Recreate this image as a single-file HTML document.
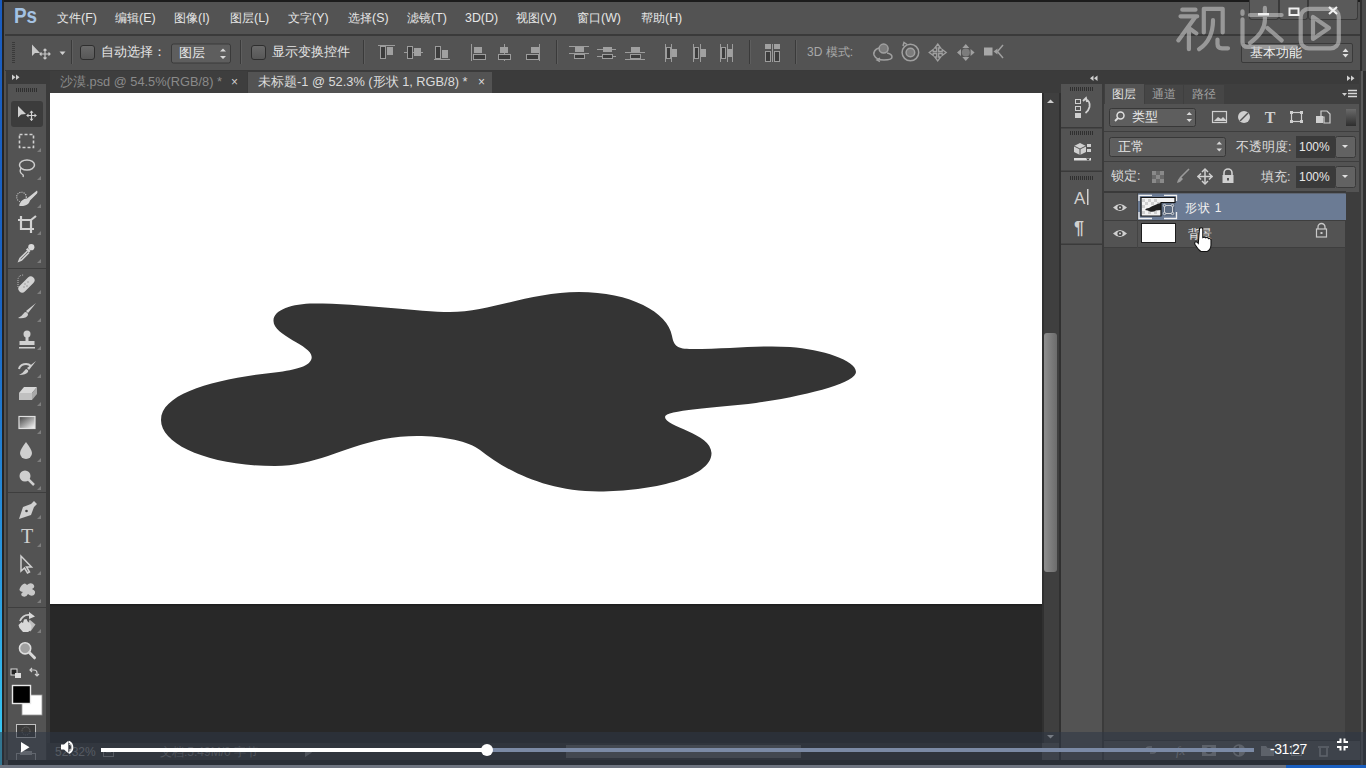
<!DOCTYPE html>
<html><head><meta charset="utf-8">
<style>
*{margin:0;padding:0;box-sizing:border-box}
html,body{width:1366px;height:768px;overflow:hidden;background:#535353;font-family:"Liberation Sans",sans-serif;color:#e6e6e6}
.a{position:absolute}
.t{position:absolute;white-space:nowrap;font-size:12px;line-height:14px;color:#e6e6e6}
</style></head><body>
<!-- frame -->
<div class="a" style="left:0;top:0;width:1366px;height:768px;background:#535353"></div>
<div class="a" style="left:0;top:0;width:1366px;height:1.5px;background:#1c1c1c"></div>
<div class="a" style="left:0;top:0;width:2.5px;height:768px;background:linear-gradient(#1a5cc0 0%,#1a64c4 40%,#2a9ae0 75%,#38c4f0 95%)"></div>
<div class="a" style="left:2px;top:0;width:2px;height:768px;background:#242424"></div>
<div class="a" style="left:4px;top:71px;width:3px;height:689px;background:#56524e"></div>
<div class="a" style="left:6px;top:71px;width:2px;height:689px;background:#3a3a3a"></div>
<div class="a" style="left:1360px;top:0;width:6px;height:71px;background:#4a4a4a"></div>
<div class="a" style="left:1360px;top:0;width:2px;height:71px;background:#2e2e2e"></div>
<!-- menu bar -->
<div class="a" style="left:5px;top:2px;width:1355px;height:32px;background:#535353"></div>
<div class="a" style="left:5px;top:34px;width:1355px;height:2px;background:#3a3a3a"></div>
<div class="t" style="left:14px;top:4px;font-size:22.5px;line-height:24px;font-weight:bold;color:#a4c2e2;transform:scaleX(0.84);transform-origin:0 0">Ps</div>
<div class="t" style="left:57px;top:11px;font-size:12.4px">文件(F)</div>
<div class="t" style="left:115px;top:11px;font-size:12.4px">编辑(E)</div>
<div class="t" style="left:174px;top:11px;font-size:12.4px">图像(I)</div>
<div class="t" style="left:230px;top:11px;font-size:12.4px">图层(L)</div>
<div class="t" style="left:288px;top:11px;font-size:12.4px">文字(Y)</div>
<div class="t" style="left:348px;top:11px;font-size:12.4px">选择(S)</div>
<div class="t" style="left:407px;top:11px;font-size:12.4px">滤镜(T)</div>
<div class="t" style="left:465px;top:11px;font-size:12.4px">3D(D)</div>
<div class="t" style="left:516px;top:11px;font-size:12.4px">视图(V)</div>
<div class="t" style="left:577px;top:11px;font-size:12.4px">窗口(W)</div>
<div class="t" style="left:641px;top:11px;font-size:12.4px">帮助(H)</div>
<!-- options bar -->
<div class="a" style="left:5px;top:36px;width:1355px;height:34px;background:#535353"></div>
<div class="a" style="left:5px;top:70px;width:1355px;height:1px;background:#3a3a3a"></div>

<!-- options bar content -->
<svg class="a" style="left:0;top:36px" width="1366" height="34">
 <g fill="#3a3a3a"><rect x="12" y="6" width="3" height="1"/><rect x="12" y="8" width="3" height="1"/><rect x="12" y="10" width="3" height="1"/><rect x="12" y="12" width="3" height="1"/><rect x="12" y="14" width="3" height="1"/><rect x="12" y="16" width="3" height="1"/><rect x="12" y="18" width="3" height="1"/><rect x="12" y="20" width="3" height="1"/><rect x="12" y="22" width="3" height="1"/><rect x="12" y="24" width="3" height="1"/><rect x="12" y="26" width="3" height="1"/></g>
 <path d="M32 8.5 L32 20 L35 17 L40 17 Z" fill="#c8c8c8"/>
 <path d="M45 13 v10 M40 18 h10 M43.5 14.5 l1.5 -1.5 l1.5 1.5 M43.5 21.5 l1.5 1.5 l1.5 -1.5 M41.5 16.5 l-1.5 1.5 l1.5 1.5 M48.5 16.5 l1.5 1.5 l-1.5 1.5" stroke="#c8c8c8" stroke-width="1.2" fill="none"/>
 <path d="M59.5 15.5 h6 l-3 3.5z" fill="#d0d0d0"/>
 <rect x="71" y="4" width="1" height="24" fill="#3a3a3a"/><rect x="72" y="4" width="1" height="24" fill="#5e5e5e"/>
 <defs><linearGradient id="cbg" x1="0" y1="0" x2="0" y2="1"><stop offset="0" stop-color="#6a6a6a"/><stop offset="1" stop-color="#565656"/></linearGradient></defs><rect x="80.5" y="9.5" width="14" height="14" rx="2.5" fill="url(#cbg)" stroke="#2e2e2e"/>
 <rect x="171.5" y="8" width="59" height="19" rx="2" fill="#5e5e5e" stroke="#3a3a3a"/>
 <path d="M220 15.5 l3 -3 l3 3z M220 20 l3 3 l3 -3z" fill="#d8d8d8"/>
 <rect x="240" y="4" width="1" height="24" fill="#3a3a3a"/><rect x="241" y="4" width="1" height="24" fill="#5e5e5e"/>
 <rect x="251.5" y="9.5" width="14" height="14" rx="2.5" fill="url(#cbg)" stroke="#2e2e2e"/>
 <rect x="363" y="4" width="1" height="24" fill="#3a3a3a"/><rect x="364" y="4" width="1" height="24" fill="#5e5e5e"/>
 <rect x="556" y="4" width="1" height="24" fill="#3a3a3a"/><rect x="557" y="4" width="1" height="24" fill="#5e5e5e"/>
 <rect x="749" y="4" width="1" height="24" fill="#3a3a3a"/><rect x="750" y="4" width="1" height="24" fill="#5e5e5e"/>
 <rect x="795" y="4" width="1" height="24" fill="#3a3a3a"/><rect x="796" y="4" width="1" height="24" fill="#5e5e5e"/>
 <g stroke="#9c9c9c" fill="none" stroke-width="1">
  <!-- align top -->
  <path d="M378 9.5 h17"/><rect x="380.5" y="10.5" width="5" height="12" fill="#3c3c3c"/><rect x="387" y="11" width="6" height="8" fill="#a0a0a0" stroke="none"/>
  <!-- align vcenter -->
  <path d="M404 16.5 h19"/><rect x="407.5" y="10.5" width="5" height="12" fill="#3c3c3c"/><rect x="414" y="12" width="7" height="8" fill="#a0a0a0" stroke="none"/>
  <!-- align bottom -->
  <path d="M434 23.5 h16"/><rect x="435.5" y="10.5" width="5" height="12" fill="#3c3c3c"/><rect x="442" y="14" width="6" height="8" fill="#a0a0a0" stroke="none"/>
  <!-- align left -->
  <path d="M471.5 8 v17"/><rect x="473.5" y="18.5" width="12" height="5" fill="#3c3c3c"/><rect x="474" y="11" width="8" height="6" fill="#a0a0a0" stroke="none"/>
  <path d="M504.5 8 v17"/><rect x="498.5" y="18.5" width="12" height="5" fill="#3c3c3c"/><rect x="500" y="11" width="8" height="6" fill="#a0a0a0" stroke="none"/>
  <path d="M539.5 8 v17"/><rect x="526.5" y="18.5" width="12" height="5" fill="#3c3c3c"/><rect x="531" y="11" width="8" height="6" fill="#a0a0a0" stroke="none"/>
  <!-- distribute -->
  <path d="M569 10.5 h20 M569 17.5 h20"/><rect x="574.5" y="18.5" width="10" height="4" fill="#3c3c3c"/><rect x="575" y="11" width="9" height="5" fill="#a0a0a0" stroke="none"/>
  <path d="M597 13.5 h19 M597 20.5 h19"/><rect x="602.5" y="18.5" width="10" height="4" fill="#3c3c3c"/><rect x="603" y="11" width="9" height="5" fill="#a0a0a0" stroke="none"/>
  <path d="M625 16.5 h20 M625 23.5 h20"/><rect x="630.5" y="18.5" width="10" height="4" fill="#3c3c3c"/><rect x="631" y="11" width="9" height="5" fill="#a0a0a0" stroke="none"/>
  <path d="M665.5 8 v18 M671.5 8 v18"/><rect x="666.5" y="11.5" width="4" height="11" fill="#3c3c3c"/><rect x="672" y="13" width="5" height="8" fill="#a0a0a0" stroke="none"/>
  <path d="M693.5 8 v18 M700.5 8 v18"/><rect x="694.5" y="11.5" width="4" height="11" fill="#3c3c3c"/><rect x="701" y="13" width="5" height="8" fill="#a0a0a0" stroke="none"/>
  <path d="M720.5 8 v18 M727.5 8 v18 M732.5 8 v18"/><rect x="721.5" y="11.5" width="4" height="11" fill="#3c3c3c"/><rect x="727" y="13" width="5" height="8" fill="#a0a0a0" stroke="none"/>
  <!-- auto align -->
  <rect x="765.5" y="15.5" width="5" height="10" fill="#3c3c3c"/><rect x="774.5" y="15.5" width="5" height="10" fill="#3c3c3c"/><path d="M772.5 8 v18"/><rect x="765" y="8" width="6" height="5" fill="#a0a0a0" stroke="none"/><rect x="774" y="8" width="6" height="5" fill="#a0a0a0" stroke="none"/>
 </g>
 <!-- 3d icons -->
 <g stroke="#a0a0a0" stroke-width="1.5" fill="#7c7c7c">
  <path d="M879 12 q-6 2 -5 7 q2 5 10 5 q8 0 8 -3 q0 -3 -5 -4" fill="none"/><circle cx="883.6" cy="12.6" r="4.5"/><path d="M880 22 l-3 2 l3 1.5" fill="none"/>
  <circle cx="910.4" cy="16.5" r="8.3" fill="none"/><circle cx="910.4" cy="16.5" r="4.3"/><path d="M903 10 l1 -3.5 l3 2" fill="none"/>
  <path d="M937.7 8 L940.7 12 L938.7 12 L938.7 15.5 L942.2 15.5 L942.2 13.5 L946.2 16.5 L942.2 19.5 L942.2 17.5 L938.7 17.5 L938.7 21 L940.7 21 L937.7 25 L934.7 21 L936.7 21 L936.7 17.5 L933.2 17.5 L933.2 19.5 L929.2 16.5 L933.2 13.5 L933.2 15.5 L936.7 15.5 L936.7 12 L934.7 12 Z" fill="#5a5a5a" stroke-width="1.3"/>
  <circle cx="965.8" cy="16.5" r="4" stroke="none"/><path d="M965.8 8 l3.5 4 h-7z M965.8 25 l3.5 -4 h-7z M957 16.5 l4 -3.5 v7z M974.6 16.5 l-4 -3.5 v7z" stroke="none" fill="#a0a0a0"/>
  <rect x="984" y="11.5" width="8.5" height="8" fill="#a8a8a8" stroke="none"/><path d="M993.5 15.5 l4 -3 v6z" fill="#a0a0a0" stroke="none"/><path d="M1003 9 l-5.5 6.5 l5.5 6.5" fill="none"/>
 </g>
</svg>
<div class="t" style="left:101px;top:45px;font-size:13px">自动选择：</div>
<div class="t" style="left:179px;top:46px;font-size:13px;color:#e8e8e8">图层</div>
<div class="t" style="left:272px;top:45px;font-size:12.5px">显示变换控件</div>
<div class="t" style="left:807px;top:45px;font-size:12px;color:#a8a8a8">3D 模式:</div>
<!-- workspace -->
<div class="a" style="left:1241px;top:43px;width:112px;height:20px;background:#5a5a5a;border:1px solid #3a3a3a;border-radius:2px"></div>
<div class="t" style="left:1250px;top:46px;font-size:13px;color:#f0f0f0">基本功能</div>
<svg class="a" style="left:1341px;top:46px" width="10" height="14"><path d="M1.5 6 l3 -3.5 l3 3.5z M1.5 8 l3 3.5 l3 -3.5z" fill="#e0e0e0"/></svg>
<!-- tab bar -->
<div class="a" style="left:46px;top:71px;width:1015px;height:22px;background:#3b3b3b"></div>
<div class="a" style="left:50px;top:71px;width:197px;height:22px;background:#3e3e3e"></div>
<div class="a" style="left:248px;top:72px;width:244px;height:21px;background:#535353"></div>
<div class="t" style="left:60px;top:75px;font-size:12.8px;color:#8a8a8a">沙漠.psd @ 54.5%(RGB/8) *</div>
<div class="t" style="left:231px;top:75px;color:#cfcfcf">×</div>
<div class="t" style="left:258px;top:75px;font-size:12.8px;color:#dcdcdc">未标题-1 @ 52.3% (形状 1, RGB/8) *</div>
<div class="t" style="left:478px;top:75px;color:#dcdcdc">×</div>
<!-- left toolbar -->
<div class="a" style="left:8px;top:71px;width:39px;height:689px;background:#535353"></div>
<div class="a" style="left:8px;top:71px;width:39px;height:13px;background:#3b3b3b"></div>
<div class="a" style="left:46px;top:71px;width:4px;height:689px;background:#3b3b3b"></div>

<!-- toolbar content -->
<svg class="a" style="left:0;top:71px" width="50" height="689">
 <path d="M12 3.5 l3.5 2.75 l-3.5 2.75z M16 3.5 l3.5 2.75 l-3.5 2.75z" fill="#d0d0d0"/>
 <g fill="#2f2f2f"><rect x="16" y="17" width="1" height="4"/><rect x="18" y="17" width="1" height="4"/><rect x="20" y="17" width="1" height="4"/><rect x="22" y="17" width="1" height="4"/><rect x="24" y="17" width="1" height="4"/><rect x="26" y="17" width="1" height="4"/><rect x="28" y="17" width="1" height="4"/><rect x="30" y="17" width="1" height="4"/><rect x="32" y="17" width="1" height="4"/><rect x="34" y="17" width="1" height="4"/><rect x="36" y="17" width="1" height="4"/></g>
 <rect x="11" y="30" width="32" height="26" rx="3" fill="#3c3c3c"/>
 <path d="M18 35 v11.5 l3 -3 l5 -0.5z" fill="#d0d0d0"/>
 <path d="M31.5 40 v9.5 M26.8 44.5 h9.5" stroke="#d4d4d4" stroke-width="1.2" fill="none"/><path d="M31.5 39.5 l-2 2.2 h4z M31.5 50 l-2 -2.2 h4z M26.3 44.5 l2.2 -2 v4z M36.7 44.5 l-2.2 -2 v4z" fill="#d4d4d4"/>
 <g id="tri" fill="#7e7e7e"><path d="M41 81 v-4 l-4 4z"/><path d="M41 109 v-4 l-4 4z"/><path d="M41 137 v-4 l-4 4z"/><path d="M41 164 v-4 l-4 4z"/><path d="M41 192 v-4 l-4 4z"/><path d="M41 223 v-4 l-4 4z"/><path d="M41 251 v-4 l-4 4z"/><path d="M41 279 v-4 l-4 4z"/><path d="M41 307 v-4 l-4 4z"/><path d="M41 335 v-4 l-4 4z"/><path d="M41 363 v-4 l-4 4z"/><path d="M41 391 v-4 l-4 4z"/><path d="M41 419 v-4 l-4 4z"/><path d="M41 448 v-4 l-4 4z"/><path d="M41 476 v-4 l-4 4z"/><path d="M41 504 v-4 l-4 4z"/><path d="M41 532 v-4 l-4 4z"/><path d="M41 562 v-4 l-4 4z"/></g>
 <!-- marquee -->
 <rect x="19.5" y="63.5" width="14" height="13" fill="none" stroke="#d0d0d0" stroke-width="1.6" stroke-dasharray="3 2"/>
 <!-- lasso -->
 <ellipse cx="27" cy="94" rx="7.5" ry="5" fill="none" stroke="#cfcfcf" stroke-width="1.5"/><path d="M21 97 q-2 4 1 6 q2 1 1 3" fill="none" stroke="#cfcfcf" stroke-width="1.3"/>
 <!-- quick select -->
 <circle cx="21.5" cy="126" r="4.8" fill="none" stroke="#c8c8c8" stroke-width="1.1" stroke-dasharray="1.1 1.1"/>
 <path d="M37 119.5 q1 1.5 0 3 l-7 7 q-1 4 -5 5 q-4 1 -6 0 q1 -3 3 -5 q2 -2 5 -2z" fill="#d4d4d4"/>
 <!-- crop -->
 <path d="M21 145 v13 h13 M18 149 h13 v13 M31 149 l5 -4" fill="none" stroke="#d2d2d2" stroke-width="2.2"/>
 <!-- eyedropper -->
 <g transform="translate(0,-71)">
  <circle cx="31.3" cy="247.2" r="3.1" fill="#dadada"/>
  <path d="M27.5 248 L30.5 251 L29 252.5 L26 249.5z" fill="#d8d8d8"/>
  <path d="M27.5 251 L20 258.5 L19 261 L21.5 260 L29 252.5" fill="none" stroke="#cfcfcf" stroke-width="1.6"/>
 </g>
 <rect x="8" y="197" width="38" height="1" fill="#3e3e3e"/>
 <!-- healing -->
 <g transform="translate(0,-71)">
  <path d="M19.5 286 L28 277.5 a3.8 3.8 0 0 1 5.4 5.4 L24.9 291.4 a3.8 3.8 0 0 1 -5.4 -5.4z" fill="#d2d2d2"/>
  <g fill="#8a8a8a"><circle cx="25" cy="284" r="0.7"/><circle cx="27" cy="286" r="0.7"/><circle cx="28" cy="282" r="0.7"/><circle cx="24" cy="287" r="0.7"/></g>
  <path d="M18 287 V280 Q18 275 24 275" fill="none" stroke="#bcbcbc" stroke-width="1" stroke-dasharray="1 1"/>
 </g>
 <!-- brush -->
 <path d="M36 232 l-8 10 l-2 -2z" fill="#d0d0d0"/><path d="M25 241 q3 0 3 3 q-2 4 -10 3 q4 -2 7 -6z" fill="#d0d0d0"/>
 <!-- stamp -->
 <circle cx="27" cy="263" r="3.5" fill="#d0d0d0"/><path d="M25.5 265 h3 v5 h6 v4 h-15 v-4 h6z" fill="#d0d0d0"/><rect x="19" y="276" width="16" height="1.5" fill="#d0d0d0"/>
 <!-- history brush -->
 <path d="M19 298 a7 6 0 0 1 12 -3" fill="none" stroke="#cfcfcf" stroke-width="2"/><path d="M36 290 l-7 9 l-2 -2z" fill="#d0d0d0"/><path d="M26 298 q3 1 2 3 q-2 3 -9 3 q4 -2 7 -6z" fill="#d0d0d0"/>
 <!-- eraser -->
 <path d="M19 322 l5 -6 h13 l-5 6z" fill="#d8d8d8"/><path d="M19 322 h13 v7 h-13z" fill="#c0c0c0"/><path d="M32 322 l5 -6 v7 l-5 6z" fill="#a8a8a8"/>
 <!-- gradient -->
 <defs><linearGradient id="gr" x1="0" y1="0" x2="1" y2="1"><stop offset="0" stop-color="#404040"/><stop offset="1" stop-color="#ffffff"/></linearGradient></defs>
 <rect x="19" y="345.5" width="16" height="12" fill="url(#gr)" stroke="#e0e0e0" stroke-width="1.2"/>
 <!-- blur -->
 <path d="M26 371 q-6 8 -6 11 a6 6 0 0 0 12 0 q0 -3 -6 -11z" fill="#cfcfcf"/>
 <!-- dodge -->
 <circle cx="25" cy="405" r="5.5" fill="#cfcfcf"/><path d="M28 408 l6 6" stroke="#cfcfcf" stroke-width="2.5"/>
 <rect x="8" y="421" width="38" height="1" fill="#3e3e3e"/>
 <!-- pen -->
 <path d="M34 430 l3 3 l-3 3 l-3 8 l-12 4 l4 -12 l8 -3z" fill="#d0d0d0"/><circle cx="26.5" cy="440" r="1.3" fill="#444"/>
 <!-- type -->
 <text x="27" y="472" font-family="Liberation Serif" font-size="20" fill="#d0d0d0" text-anchor="middle">T</text>
 <!-- path select -->
 <path d="M21 485 v15 l3.5 -3 l3 5 l2 -1 l-3 -5 h5z" fill="none" stroke="#d0d0d0" stroke-width="1.5"/>
 <!-- shape -->
 <path d="M22 514 q3 -3 5 0 q3 -3 6 -1 q3 3 -1 5 q5 2 2 6 q-3 2 -6 -1 q-2 4 -6 2 q-2 -2 1 -4 q-5 -1 -3 -4 q1 -2 2 -3z" fill="#c8c8c8"/>
 <rect x="8" y="536" width="38" height="1" fill="#3e3e3e"/>
 <!-- hand -->
 <g transform="translate(0,-71)">
  <path d="M20 621 Q23 614 30 615" fill="none" stroke="#d0d0d0" stroke-width="1.8"/><path d="M29 612 L35 616.5 L29 619z" fill="#d8d8d8"/>
  <path d="M29.5 619.5 L35.5 624.5 L30.5 631.5 L27 628z" fill="#bdbdbd"/>
  <path d="M18.5 625 L21.5 622 L23 623 L24 619.5 L26.5 619 L28 622 L30 623 L31.5 626 L31 630 L28 632 L23 632 L19.5 628z" fill="#d8d8d8"/>
  <circle cx="25.1" cy="648.3" r="5.6" fill="#a0a0a0" stroke="#dedede" stroke-width="1.6"/><path d="M29.3 652.5 L34.5 657.8" stroke="#d8d8d8" stroke-width="3" stroke-linecap="round"/>
 </g>
 <!-- default colors & swap -->
 <rect x="11" y="598" width="6" height="6" fill="#222" stroke="#ddd" stroke-width="1"/><rect x="15" y="602" width="6" height="5" fill="#ddd"/>
 <path d="M32 597 l-2 2 l2 2 M30 599 h4 q3 0 3 3 v3 M35 603 l2 2 l2 -2" fill="none" stroke="#d0d0d0" stroke-width="1.2"/>
 <rect x="22" y="624" width="20" height="20" fill="#ffffff" stroke="#9a9a9a" stroke-width="0.8"/>
 <rect x="12.5" y="614.5" width="18" height="18" fill="#000" stroke="#e8e8e8" stroke-width="1.4"/>
 <!-- quick mask -->
 <rect x="16.5" y="653.5" width="19" height="13" fill="#3a3a3a" stroke="#c0c0c0" stroke-width="1"/>
 <rect x="16.5" y="682.5" width="19" height="12" fill="none" stroke="#a0a0a0" stroke-width="1"/><rect x="20" y="680" width="12" height="4" fill="#a0a0a0"/><circle cx="26" cy="660" r="4" fill="none" stroke="#777" stroke-width="1" stroke-dasharray="1 1"/>
</svg>
<!-- canvas -->
<div class="a" style="left:50px;top:93px;width:992px;height:650px;background:#282828"></div>
<div class="a" style="left:50px;top:604px;width:992px;height:3px;background:linear-gradient(#1c1c1c,#282828)"></div>
<div class="a" style="left:50px;top:93px;width:992px;height:511px;background:#ffffff"></div>
<svg class="a" style="left:0;top:0" width="1366" height="768"><path d="M273.5 321 C273 310 292 303.5 314 303.5 C360 303.5 420 312 450 312 C490 312 530 292 579 292 C630 292 668 312 672 336 C674 346 677 349 692 349 C730 349 760 345 790 347 C822 349.5 856 360 856 372 C856 382 812 395 756 403 C715 408 665 410 665 417 C665 427 711 433 711.5 453 C712 478 650 491.5 599 491.5 C545 491.5 505 470 480 450 C465 438 420 432 384 439 C340 448 315 466 275 466 C210 466 161 445 161 420 C161 392 220 378 279 372 C300 369 311.7 365 311.7 357 C311.7 345 273.5 336 273.5 321Z" fill="#343434"/></svg>
<!-- vscroll -->
<div class="a" style="left:1042px;top:93px;width:17px;height:650px;background:#3f3f3f"></div>
<div class="a" style="left:1042px;top:93px;width:2px;height:650px;background:#303030"></div>
<div class="a" style="left:1044px;top:333px;width:13px;height:239px;background:linear-gradient(90deg,#8e8e8e,#6c6c6c);border-radius:3px"></div>
<div class="a" style="left:1059px;top:71px;width:2px;height:689px;background:#303030"></div>
<div class="a" style="left:1042px;top:71px;width:19px;height:22px;background:#3b3b3b"></div>
<!-- mini strip -->
<div class="a" style="left:1061px;top:71px;width:41px;height:689px;background:#535353"></div>
<div class="a" style="left:1061px;top:71px;width:41px;height:13px;background:#3b3b3b"></div>
<div class="a" style="left:1102px;top:71px;width:2px;height:689px;background:#3b3b3b"></div>
<svg class="a" style="left:1061px;top:71px" width="43" height="661">
 <path d="M36.5 4.5 l-3.5 2.75 l3.5 2.75z M32.5 4.5 l-3.5 2.75 l3.5 2.75z" fill="#d0d0d0"/>
 <rect x="0" y="56" width="41" height="1.5" fill="#3a3a3a"/>
 <rect x="0" y="99.5" width="41" height="1.5" fill="#3a3a3a"/>
 <rect x="0" y="172.5" width="41" height="1.5" fill="#3a3a3a"/>
 <g fill="#2f2f2f">
  <rect x="9" y="16" width="24" height="4"/><rect x="9" y="60" width="24" height="4"/><rect x="9" y="105" width="24" height="4"/>
 </g>
 <g fill="#535353"><rect x="10" y="16" width="1" height="4"/><rect x="12" y="16" width="1" height="4"/><rect x="14" y="16" width="1" height="4"/><rect x="16" y="16" width="1" height="4"/><rect x="18" y="16" width="1" height="4"/><rect x="20" y="16" width="1" height="4"/><rect x="22" y="16" width="1" height="4"/><rect x="24" y="16" width="1" height="4"/><rect x="26" y="16" width="1" height="4"/><rect x="28" y="16" width="1" height="4"/><rect x="30" y="16" width="1" height="4"/><rect x="32" y="16" width="1" height="4"/>
 <rect x="10" y="60" width="1" height="4"/><rect x="12" y="60" width="1" height="4"/><rect x="14" y="60" width="1" height="4"/><rect x="16" y="60" width="1" height="4"/><rect x="18" y="60" width="1" height="4"/><rect x="20" y="60" width="1" height="4"/><rect x="22" y="60" width="1" height="4"/><rect x="24" y="60" width="1" height="4"/><rect x="26" y="60" width="1" height="4"/><rect x="28" y="60" width="1" height="4"/><rect x="30" y="60" width="1" height="4"/><rect x="32" y="60" width="1" height="4"/>
 <rect x="10" y="105" width="1" height="4"/><rect x="12" y="105" width="1" height="4"/><rect x="14" y="105" width="1" height="4"/><rect x="16" y="105" width="1" height="4"/><rect x="18" y="105" width="1" height="4"/><rect x="20" y="105" width="1" height="4"/><rect x="22" y="105" width="1" height="4"/><rect x="24" y="105" width="1" height="4"/><rect x="26" y="105" width="1" height="4"/><rect x="28" y="105" width="1" height="4"/><rect x="30" y="105" width="1" height="4"/><rect x="32" y="105" width="1" height="4"/></g>
 <!-- history -->
 <rect x="14.5" y="28.5" width="5" height="4" fill="none" stroke="#cfcfcf"/><rect x="14.5" y="35.5" width="5" height="4" fill="none" stroke="#cfcfcf"/><rect x="14" y="42" width="6" height="5" fill="#cfcfcf"/>
 <path d="M22 30 l3 -3 l1 4 M24.5 28 q5 2 4 8 q-1 4 -4 6" fill="none" stroke="#d0d0d0" stroke-width="1.8"/>
 <!-- 3d -->
 <path d="M19 72 l6 3 v6 l-6 3 l-6 -3 v-6z" fill="#cfcfcf"/><path d="M13 75 l6 3 l6 -3 M19 78 v6" stroke="#535353" fill="none"/>
 <rect x="26" y="73" width="4" height="3" fill="#cfcfcf"/><rect x="26" y="78" width="4" height="3" fill="#cfcfcf"/>
 <rect x="13" y="87" width="17" height="2.5" fill="#dedede"/><path d="M25 87.5 h4 l-2 2z" fill="#333"/>
 <!-- A| -->
 <text x="13" y="133" font-family="Liberation Sans" font-size="17" fill="#d0d0d0">A</text><rect x="26" y="118" width="1.5" height="16" fill="#d0d0d0"/>
 <text x="13" y="163" font-family="Liberation Sans" font-size="18" font-weight="bold" fill="#d0d0d0">¶</text>
</svg>
<!-- layers panel -->
<div class="a" style="left:1104px;top:71px;width:256px;height:13px;background:#3b3b3b"></div>
<div class="a" style="left:1104px;top:84px;width:256px;height:20px;background:#3f3f3f"></div>
<div class="a" style="left:1105px;top:84px;width:39px;height:20px;background:#535353"></div>
<div class="a" style="left:1145px;top:85px;width:38px;height:19px;background:#464646"></div>
<div class="a" style="left:1184px;top:85px;width:40px;height:19px;background:#464646"></div>
<div class="a" style="left:1104px;top:104px;width:256px;height:656px;background:#535353"></div>
<div class="a" style="left:1104px;top:131px;width:256px;height:1px;background:#3e3e3e"></div>
<div class="a" style="left:1104px;top:161px;width:256px;height:1px;background:#3e3e3e"></div>
<div class="a" style="left:1104px;top:191px;width:242px;height:1.5px;background:#3a3a3a"></div>
<div class="a" style="left:1104px;top:248px;width:242px;height:512px;background:#474747"></div>
<div class="a" style="left:1345px;top:192px;width:14px;height:568px;background:#3d3d3d"></div>
<div class="a" style="left:1359px;top:71px;width:2px;height:697px;background:#3d3d3d"></div>
<div class="a" style="left:1361px;top:71px;width:2px;height:697px;background:#5a5a5a"></div>
<div class="a" style="left:1363px;top:71px;width:3px;height:697px;background:#303030"></div>
<div class="t" style="left:1112px;top:87px;font-size:12px;color:#e0e0e0">图层</div>
<div class="t" style="left:1152px;top:87px;font-size:12px;color:#a0a0a0">通道</div>
<div class="t" style="left:1192px;top:87px;font-size:12px;color:#a0a0a0">路径</div>
<svg class="a" style="left:1104px;top:71px" width="256" height="180">
 <path d="M243 4.5 l3.5 2.75 l-3.5 2.75z M247 4.5 l3.5 2.75 l-3.5 2.75z" fill="#d0d0d0"/>
 <path d="M238 22 h5 l-2.5 3z" fill="#cfcfcf"/><path d="M244 19.5 h9 M244 22.5 h9 M244 25.5 h9" stroke="#d8d8d8" stroke-width="1.4"/>
 <!-- filter dropdown -->
 <rect x="5.5" y="37.5" width="86" height="18" rx="2" fill="#5e5e5e" stroke="#383838"/>
 <circle cx="16.5" cy="44.5" r="3.5" fill="none" stroke="#e0e0e0" stroke-width="1.5"/><path d="M14 47 l-3 3" stroke="#e0e0e0" stroke-width="1.8"/>
 <path d="M82.5 44 l2.75 -3 l2.75 3z M82.5 48 l2.75 3 l2.75 -3z" fill="#d8d8d8"/>
 <!-- filter icons -->
 <rect x="108.5" y="40.5" width="14" height="11" fill="#5a5a5a" stroke="#cfcfcf" stroke-width="1.2"/><path d="M110 50 l4 -4 l3 2 l2 -2 l3 3 v1z" fill="#cfcfcf"/>
 <circle cx="140" cy="46" r="6" fill="#cfcfcf"/><path d="M136 50 l8 -8" stroke="#535353" stroke-width="1.5"/>
 <text x="166" y="52" font-family="Liberation Serif" font-size="16" font-weight="bold" fill="#cfcfcf" text-anchor="middle">T</text>
 <rect x="187.5" y="41.5" width="10" height="9" fill="none" stroke="#cfcfcf" stroke-width="1.2"/><g fill="#cfcfcf"><rect x="186" y="40" width="3" height="3"/><rect x="196" y="40" width="3" height="3"/><rect x="186" y="49" width="3" height="3"/><rect x="196" y="49" width="3" height="3"/></g>
 <path d="M217 40 h6 l3 3 v9 h-6 v-6 h-3z" fill="none" stroke="#cfcfcf" stroke-width="1.2"/><rect x="212" y="45" width="7" height="7" fill="#cfcfcf"/>
 <defs><linearGradient id="tg" x1="0" y1="0" x2="0" y2="1"><stop offset="0" stop-color="#6a6a6a"/><stop offset="1" stop-color="#2e2e2e"/></linearGradient></defs>
 <rect x="242" y="38" width="10" height="17" fill="url(#tg)"/>
 <!-- blend dropdown -->
 <rect x="5.5" y="66.5" width="116" height="19" rx="2" fill="#5e5e5e" stroke="#383838"/>
 <path d="M112.5 73.5 l2.75 -3 l2.75 3z M112.5 77.5 l2.75 3 l2.75 -3z" fill="#d8d8d8"/>
 <rect x="192" y="65" width="39" height="22" fill="#3a3a3a"/>
 <rect x="231.5" y="65.5" width="20" height="21" rx="2" fill="#626262" stroke="#3a3a3a"/><path d="M238 74 h6 l-3 3z" fill="#e0e0e0"/>
 <rect x="192" y="95" width="39" height="22" fill="#3a3a3a"/>
 <rect x="231.5" y="95.5" width="20" height="21" rx="2" fill="#626262" stroke="#3a3a3a"/><path d="M238 104 h6 l-3 3z" fill="#e0e0e0"/>
 <!-- lock icons -->
 <g fill="#8a8a8a"><rect x="48" y="100" width="12" height="12" fill="#6a6a6a"/><rect x="48" y="100" width="4" height="4"/><rect x="56" y="100" width="4" height="4"/><rect x="52" y="104" width="4" height="4"/><rect x="48" y="108" width="4" height="4"/><rect x="56" y="108" width="4" height="4"/></g>
 <path d="M85 98 l-9 9" stroke="#9a9a9a" stroke-width="1.6"/><path d="M77 106 q-3 1 -4 6 q4 -1 6 -4z" fill="#9a9a9a"/>
 <path d="M101 98 v15 M93.5 105.5 h15" stroke="#d0d0d0" stroke-width="1.5"/><path d="M98 101 l3 -3 l3 3 M98 110 l3 3 l3 -3 M97 102.5 l-3 3 l3 3 M105 102.5 l3 3 l-3 3" fill="none" stroke="#d0d0d0" stroke-width="1.5"/>
 <path d="M120 104 v-2 a4 4 0 0 1 8 0 v2" fill="none" stroke="#d0d0d0" stroke-width="1.6"/><rect x="118.5" y="104" width="11" height="8" fill="#d0d0d0"/><rect x="123" y="107" width="2" height="2.5" fill="#535353"/>
 <!-- layer rows -->
 <rect x="33" y="122.5" width="209" height="26.5" fill="#6b7b94"/>
 <rect x="0" y="149" width="242" height="1" fill="#3e3e3e"/>
 <rect x="0" y="176" width="242" height="1" fill="#3e3e3e"/>
 <rect x="33" y="122" width="1" height="55" fill="#444"/>
 <!-- eyes -->
 <path d="M9 136.5 q7 -7 14 0 q-7 7 -14 0z" fill="#d0d0d0"/><circle cx="16" cy="136.5" r="2.6" fill="#474747"/><circle cx="16" cy="136.5" r="1" fill="#d0d0d0"/>
 <path d="M9 162.5 q7 -7 14 0 q-7 7 -14 0z" fill="#d0d0d0"/><circle cx="16" cy="162.5" r="2.6" fill="#474747"/><circle cx="16" cy="162.5" r="1" fill="#d0d0d0"/>
 <!-- thumb 1 -->
 <g transform="translate(-1104,-71)">
  <path d="M1139 201 V195.3 H1152 M1164 195.3 H1176.5 V201 M1139 212 V218.5 H1152 M1164 218.5 H1176.5 V212" fill="none" stroke="#f0f0f0" stroke-width="1.3"/>
  <rect x="1141.5" y="197.5" width="19.5" height="18.5" fill="#f2f2f2"/>
  <rect x="1141.5" y="197.5" width="33.5" height="5" fill="#f2f2f2"/>
  <g fill="#cfcfcf"><rect x="1142" y="199" width="3" height="3"/><rect x="1148" y="199" width="3" height="3"/><rect x="1154" y="199" width="3" height="3"/><rect x="1145" y="202" width="3" height="3"/><rect x="1151" y="202" width="3" height="3"/><rect x="1157" y="202" width="3" height="3"/><rect x="1142" y="205" width="3" height="3"/><rect x="1142" y="211" width="3" height="3"/><rect x="1148" y="211" width="3" height="3"/><rect x="1154" y="211" width="3" height="3"/></g>
  <path d="M1145 210 q1 -2 4 -2 q3 -2 6 -3 q3 -1.5 6 -2 v7 q-3 0 -5 0.5 q-3 2 -6 1 q-2 -1.5 -5 -1.5z" fill="#202020"/>
  <rect x="1161" y="202.5" width="14" height="13.5" fill="#5d6b80"/>
  <path d="M1141 197.5 H1175 V202.5 H1161 V216 H1141 Z" fill="none" stroke="#151515" stroke-width="1.2"/>
  <rect x="1164.5" y="205.5" width="8" height="8" fill="none" stroke="#dcdcdc" stroke-width="0.9"/>
  <g fill="#5d6b80" stroke="#e6e6e6" stroke-width="0.8"><circle cx="1164.5" cy="205.5" r="1.2"/><circle cx="1172.5" cy="205.5" r="1.2"/><circle cx="1164.5" cy="213.5" r="1.2"/><circle cx="1172.5" cy="213.5" r="1.2"/></g>
 </g>
 <!-- thumb 2 -->
 <rect x="37.5" y="152.5" width="34" height="19" fill="#ffffff" stroke="#1e1e1e" stroke-width="1"/>
 <!-- lock -->
 <path d="M214 158 v-2 a3.5 3.5 0 0 1 7 0 v2" fill="none" stroke="#c8c8c8" stroke-width="1.3"/><rect x="212.5" y="158" width="10" height="8" fill="none" stroke="#c8c8c8" stroke-width="1.2"/><rect x="216.5" y="161" width="2" height="2" fill="#c8c8c8"/>
</svg>
<div class="t" style="left:1132px;top:110px;font-size:12.5px;color:#e8e8e8">类型</div>
<div class="t" style="left:1118px;top:140px;font-size:12.5px;color:#e8e8e8">正常</div>
<div class="t" style="left:1236px;top:140px;font-size:12.5px;color:#dcdcdc">不透明度:</div>
<div class="t" style="left:1299px;top:140px;font-size:12px;color:#e8e8e8">100%</div>
<div class="t" style="left:1111px;top:169px;font-size:12.5px;color:#dcdcdc">锁定:</div>
<div class="t" style="left:1261px;top:170px;font-size:12.5px;color:#dcdcdc">填充:</div>
<div class="t" style="left:1299px;top:170px;font-size:12px;color:#e8e8e8">100%</div>
<div class="t" style="left:1185px;top:201px;font-size:12px;color:#f0f0f0;letter-spacing:0.8px">形状 1</div>
<div class="t" style="left:1188px;top:227px;font-size:12px;color:#e8e8e8">背景</div>
<!-- hand cursor -->
<svg class="a" style="left:1188px;top:224px" width="26" height="28">
 <path d="M11.5 4.5 q1.8 -1.5 3.3 0 v9 q1.8 -1 3 0.3 q1.8 -0.8 2.8 0.8 q1.8 -0.5 2.4 1.2 v5.5 q-0.3 4.5 -3.8 6.2 h-6.2 q-2.5 -1.5 -6 -7 q-1 -2.5 0.8 -2.8 q1.3 0 2.5 1.6 z" fill="#ffffff" stroke="#111" stroke-width="1.1"/>
</svg>
<!-- scrollbar arrows -->
<svg class="a" style="left:1042px;top:93px" width="17" height="650"><path d="M5 10 l3.5 -3.5 l3.5 3.5z" fill="#cfcfcf"/><path d="M5 642 l3.5 3.5 l3.5 -3.5z" fill="#cfcfcf"/></svg>
<!-- status bar under video bar -->
<div class="a" style="left:47px;top:743px;width:995px;height:17px;background:#383838"></div>
<div class="a" style="left:330px;top:743px;width:712px;height:17px;background:#333333"></div>
<div class="a" style="left:8px;top:760px;width:1352px;height:5px;background:#262626"></div>
<div class="t" style="left:55px;top:745px;font-size:12px;color:#8a8a8a">52.32%</div>
<svg class="a" style="left:100px;top:745px" width="20" height="14"><rect x="3.5" y="3.5" width="10" height="8" fill="none" stroke="#8a8a8a"/><path d="M6 7 h5" stroke="#8a8a8a"/></svg>
<div class="t" style="left:160px;top:745px;font-size:12px;color:#7a7a7a">文档:5.49M/0 字节</div>
<svg class="a" style="left:300px;top:745px" width="20" height="14"><path d="M5 3 v9 l7 -4.5z" fill="#7a7a7a"/></svg>
<div class="a" style="left:566px;top:745px;width:235px;height:13px;background:#5e5e5e"></div>
<!-- window controls -->
<div class="a" style="left:1249px;top:0;width:30px;height:20px;background:#5a5a5a;border:1px solid #3a3a3a;border-top:none;border-radius:0 0 3px 3px"></div>
<div class="a" style="left:1279px;top:0;width:29px;height:20px;background:#5a5a5a;border:1px solid #3a3a3a;border-top:none;border-radius:0 0 3px 3px"></div>
<div class="a" style="left:1308px;top:0;width:50px;height:20px;background:#5a5a5a;border:1px solid #3a3a3a;border-top:none;border-radius:0 0 3px 3px"></div>
<svg class="a" style="left:1166px;top:0" width="200" height="60">
 <!-- watermark -->
 <g transform="translate(-1166,0)" fill="none" stroke="rgba(196,196,196,0.62)" stroke-width="4.2" stroke-linecap="round" stroke-linejoin="round">
  <path d="M1182.3 9.7 h13.2 M1180.5 16.3 h16.7 M1195.5 16.7 L1178.3 40.4 M1188.9 26.4 V49.2 M1190.2 29 L1196.4 33.4"/>
  <path d="M1203.8 32.5 V8.8 H1222.7 V32.5 M1213 20.2 Q1213 40 1199 49.2 M1217.5 39.5 V44 Q1217.5 48.3 1222 48.3 H1228"/>
  <path d="M1242.5 11.4 V14 M1242.5 19.3 V42 Q1242.5 47 1248 47 H1296"/>
  <path d="M1250 15 H1281.6 M1264.9 7.9 V20 Q1264.9 32 1250 43 M1267.5 28.1 L1281.6 40.4"/>
  <rect x="1300.7" y="8.8" width="38.1" height="39.5" rx="8"/>
  <path d="M1313 17 V39 L1329 28 Z"/>
 </g>
 <rect x="92" y="13" width="11" height="2.5" fill="#f0f0f0"/>
 <rect x="123.5" y="8.5" width="9" height="6.5" fill="none" stroke="#f0f0f0" stroke-width="2"/>
 <path d="M163 7 l8 7 M171 7 l-8 7" stroke="#f0f0f0" stroke-width="2.2"/>
</svg>
<!-- layers bottom bar -->
<div class="a" style="left:1104px;top:740px;width:256px;height:20px;background:#535353;border-top:1px solid #3a3a3a"></div>
<svg class="a" style="left:1104px;top:740px" width="256" height="20" fill="#9a9a9a" stroke="#9a9a9a">
 <path d="M42 10 a3 3 0 0 1 3 -3 h3 M52 10 a3 3 0 0 1 -3 3 h-3 M44 10 h6" fill="none" stroke-width="1.5"/>
 <text x="72" y="15" font-family="Liberation Serif" font-style="italic" font-size="13" stroke="none">fx</text>
 <rect x="98" y="5" width="14" height="11" stroke="none"/><circle cx="105" cy="10.5" r="3.5" fill="#535353" stroke="none"/>
 <circle cx="135" cy="10.5" r="5.5" fill="none" stroke-width="1.5"/><path d="M135 5 a5.5 5.5 0 0 1 0 11z" stroke="none"/>
 <path d="M157 6 h5 l1.5 2 h6.5 v8 h-13z" stroke="none"/>
 <rect x="187.5" y="5.5" width="10" height="10" fill="none"/>
 <path d="M214 7 h11 M216 8 v8 h7 v-8" fill="none" stroke-width="1.5"/>
</svg>
<!-- video bar -->
<div class="a" style="left:0;top:732px;width:1366px;height:33px;background:rgba(47,55,70,0.56)"></div>
<div class="a" style="left:0;top:765px;width:1366px;height:3px;background:#6e7480"></div>
<div class="a" style="left:1286px;top:765px;width:80px;height:3px;background:#1a5fc0"></div>
<div class="a" style="left:101px;top:748px;width:386px;height:4px;background:#ffffff"></div>
<div class="a" style="left:487px;top:748px;width:767px;height:4px;background:#7b8aa5"></div>
<div class="a" style="left:481px;top:744px;width:12px;height:12px;border-radius:6px;background:#ffffff"></div>
<svg class="a" style="left:0;top:732px" width="1366" height="33">
 <path d="M21 10 v10.5 l8.5 -5.25z" fill="#ffffff"/>
 <path d="M61 12.5 h3 l4.3 -3.8 v12.6 l-4.3 -3.8 h-3z" fill="#ffffff"/><path d="M68.6 9.6 A5.6 6.1 0 0 1 68.6 21.1" fill="none" stroke="#ffffff" stroke-width="2"/><path d="M69 12.3 A2.6 2.9 0 0 1 69 18.1" fill="none" stroke="#bbbbbb" stroke-width="1.1"/>
 <path d="M1337 10 h3.5 v-3.5 M1348 10 h-3.5 v-3.5 M1337 15 h3.5 v3.5 M1348 15 h-3.5 v3.5" fill="none" stroke="#ffffff" stroke-width="2"/>
</svg>
<div class="t" style="left:1270px;top:741px;font-size:14px;line-height:16px;color:#ffffff;letter-spacing:-0.5px">-31:27</div>
</body></html>
